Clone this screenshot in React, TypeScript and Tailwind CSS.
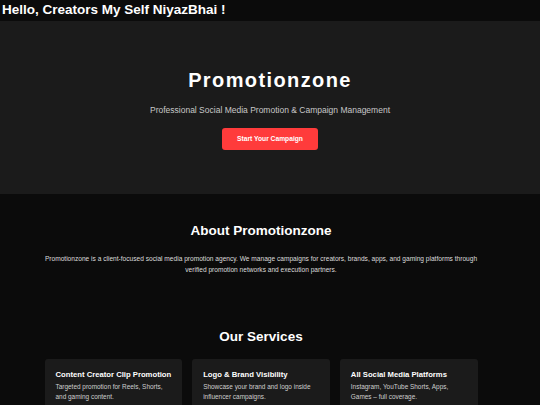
const SERVICES = [
  { title: "Content Creator Clip Promotion", desc: "Targeted promotion for Reels, Shorts, and gaming content." },
  { title: "Logo & Brand Visibility", desc: "Showcase your brand and logo inside influencer campaigns." },
  { title: "All Social Media Platforms", desc: "Instagram, YouTube Shorts, Apps, Games – full coverage." },
];

export default function App() {
  return (
    <div className="min-h-[405px] bg-[#0b0b0b] text-white" style={{ fontFamily: '"Liberation Sans", Arial, sans-serif' }}>
      <h1 className="h-[21px] px-[2px] text-[13.5px] leading-[20px] font-bold">Hello, Creators My Self NiyazBhai !</h1>

      <section className="bg-[#1b1b1b] flex flex-col items-center pt-[47px] pb-[44px]">
        <h2 className="text-[20px] leading-[24px] font-bold tracking-[1.4px]">Promotionzone</h2>
        <p className="mt-[12px] text-[8.5px] leading-[12px] text-[#c8c8c8]">
          Professional Social Media Promotion &amp; Campaign Management
        </p>
        <button className="mt-[12px] h-[22px] px-[15px] rounded-[3px] bg-[#ff3b3b] text-[6.7px] font-bold text-white">
          Start Your Campaign
        </button>
      </section>

      <section className="flex flex-col items-center pt-[29px] pr-[18px]">
        <h2 className="text-[13.5px] leading-[16px] font-bold">About Promotionzone</h2>
        <p className="mt-[13.5px] w-[440px] text-center text-[6.6px] leading-[11px] text-[#dcdcdc]">
          Promotionzone is a client-focused social media promotion agency. We manage campaigns for creators, brands, apps, and gaming platforms through verified promotion networks and execution partners.
        </p>
      </section>

      <section className="flex flex-col items-center pt-[54px] pr-[18px]">
        <h2 className="text-[13.5px] leading-[16px] font-bold">Our Services</h2>
        <div className="mt-[14px] grid grid-cols-3 gap-[10px] w-[433px]">
          {SERVICES.map((s) => (
            <div key={s.title} className="rounded-[3px] bg-[#1b1b1b] pl-[11px] pr-[9px] pt-[11.5px] pb-[12px]">
              <div className="whitespace-nowrap text-[7.7px] leading-[10px] font-bold">{s.title}</div>
              <div className="mt-[1.6px] text-[6.45px] leading-[10.7px] text-[#cfcfcf]">{s.desc}</div>
            </div>
          ))}
        </div>
      </section>
    </div>
  );
}
